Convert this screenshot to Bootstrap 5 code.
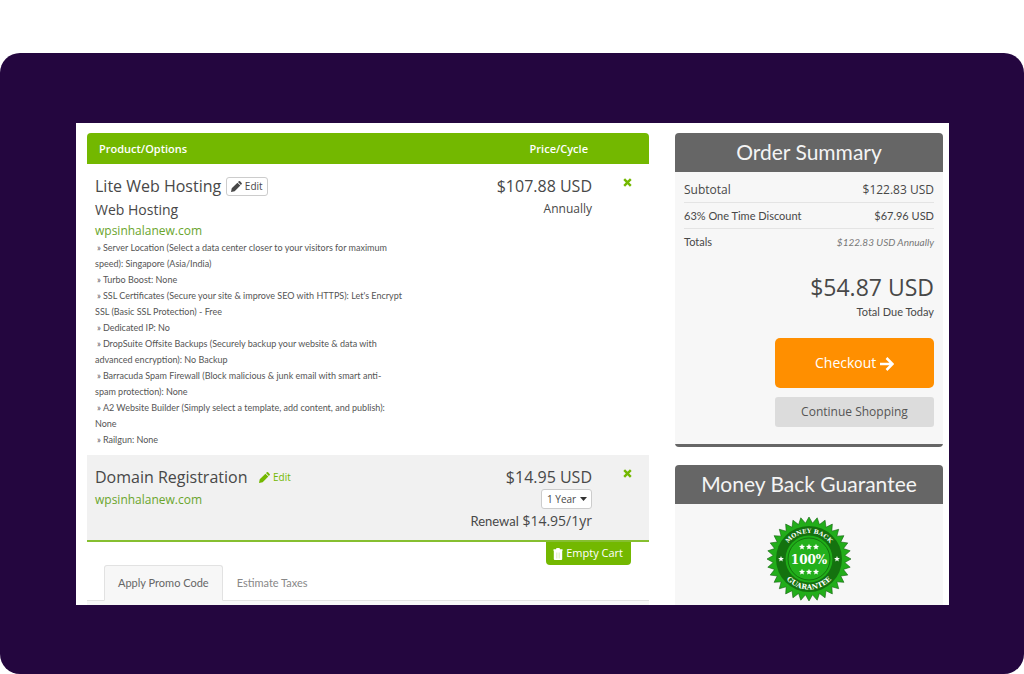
<!DOCTYPE html>
<html lang="en">
<head>
<meta charset="utf-8">
<meta name="viewport" content="width=device-width, initial-scale=1">
<title>Shopping Cart</title>
<link href="https://cdn.jsdelivr.net/npm/bootstrap@5.3.0/dist/css/bootstrap.min.css" rel="stylesheet">
<style>
  :root { --leaf: #73b800; --leaf-text: #6aa52c; --slate: #666; --ink: #484848; }
  body { font-family: "Open Sans", "Noto Sans", sans-serif; color: var(--ink); font-size: 12px; line-height: 16px; background: #fff; }
  .stage { margin-top: 53px; padding: 70px 75px 69px 76px; background: #24063f; border-radius: 20px; }
  .cart-page { display: grid; grid-template-columns: 562fr 268fr; column-gap: 26px; padding: 10px 6px 0 11px; background: #fff; }
  .narrow { font-family: Lato, "Open Sans", sans-serif; font-size: 11px; }

  .cart-table { width: 100%; border-bottom: 2px solid #86bf30; }
  .cart-table th { background: var(--leaf); color: #fff; font: 600 11px/16px "Open Sans", sans-serif; padding: 8px 4px 7px 12px; }
  .cart-table th:first-child { border-radius: 4px 0 0 0; }
  .cart-table th:last-child { border-radius: 0 4px 0 0; width: 57px; }
  .cart-table td { vertical-align: top; padding: 10px 0 7px 8px; }
  .cart-table td:last-child { padding: 12px 0 0 31px; }
  .cart-table .alt-row td { background: #f1f1f1; }
  .item-title { font-size: 16px; line-height: 24px; font-weight: 400; margin: 0; }
  .item-group { font-size: 14px; line-height: 24px; }
  .item-domain { font-size: 12px; line-height: 18px; color: var(--leaf-text); }
  .alt-row .item-domain, .cycle { font-size: 12px; line-height: 22px; }
  .renewal { font-size: 14px; line-height: 24px; }
  .renewal .narrow { font-size: 13px; }
  .options { font: 9px/16px Lato, "Open Sans", sans-serif; color: #555; }
  .options li::before { content: "»"; padding: 0 2px; }
  .edit-btn { font: 10px/17px "Open Sans", sans-serif; padding: 0 4px; border: 1px solid #ccc; border-radius: 3px; background: #fff; color: var(--ink); margin-left: 5px; }
  .edit-link { font: 10px/17px "Open Sans", sans-serif; color: var(--leaf); text-decoration: none; margin-left: 12px; }
  .remove-btn { display: block; border: 0; background: none; padding: 0; color: var(--leaf); line-height: 12px; }
  .term { appearance: none; width: 51px; height: 20px; padding: 0 0 0 5px; border: 1px solid #ccc; border-radius: 3px; font-size: 10px; line-height: 17px; color: var(--ink);
    background: #fff url("data:image/svg+xml,%3Csvg xmlns='http://www.w3.org/2000/svg' viewBox='0 0 8 4'%3E%3Cpath d='M0 0h7L3.500 4z' fill='%23333'/%3E%3C/svg%3E") no-repeat right 3px center / 8px 4px; }
  .empty-btn { margin-right: 18px; padding: 3px 8px 4px 7px; border: 0; border-radius: 0 0 4px 4px; background: var(--leaf); color: #fff; font-size: 11px; line-height: 16px; }
  .cart-tabs { border-bottom: 1px solid #e2e2e2; padding-left: 17px; }
  .cart-tabs .nav-link { font-size: 11px; line-height: 16px; padding: 9px 13px; color: #888; border-radius: 3px 3px 0 0; }
  .cart-tabs .nav-link.active { background: #f7f7f7; color: #666; border-color: #e2e2e2 #e2e2e2 #f7f7f7; }
  .tab-body { height: 4px; background: #f7f7f7; }

  .side-title { margin: 0; height: 39px; background: var(--slate); color: #f4f4f4; border-radius: 4px 4px 0 0; font: 400 21px/38px Lato, sans-serif; text-align: center; }
  .side-body { background: #f7f7f7; padding: 5px 9px 0; }
  .summary { border-bottom: 3px solid var(--slate); border-radius: 4px; margin-bottom: 18px; }
  .summary .side-body { padding-bottom: 17px; }
  .line { height: 26px; border-bottom: 1px solid #e4e4e4; }
  .annual { font-size: 10px; color: #777; }
  .due { font-size: 23px; line-height: 32px; margin-top: 16px; }
  .due-note { line-height: 18px; }
  .checkout-btn { width: 159px; height: 50px; border: 0; border-radius: 5px; background: #ff8f00; color: #fff; font-size: 14px; font-weight: 500; margin-top: 17px; }
  .shop-btn { width: 159px; height: 30px; border: 0; border-radius: 3px; background: #dcdcdc; color: #555; font-size: 12px; margin-top: 9px; }
  .seal-body { padding-top: 12px; }
</style>
</head>
<body>
<main class="stage">
  <div class="cart-page">
    <section>
      <table class="cart-table">
        <thead>
          <tr><th scope="col">Product/Options</th><th scope="col" class="text-end">Price/Cycle</th><th scope="col" aria-label="Remove"></th></tr>
        </thead>
        <tbody>
          <tr>
            <td>
              <div class="d-flex align-items-center">
                <h2 class="item-title">Lite Web Hosting</h2>
                <button class="edit-btn" type="button"><svg width="11" height="11" viewBox="0 0 12 12" aria-hidden="true"><path fill="currentColor" d="M0 12l.8-4L7 1.800 10.200 5 4 11.200zM7.600 1.200 8.600.3q.6-.5 1.300.1l1.700 1.700q.6.700.1 1.300l-.9 1z"/></svg> Edit</button>
              </div>
              <div class="item-group">Web Hosting</div>
              <div class="item-domain">wpsinhalanew.com</div>
              <ul class="options list-unstyled mb-0">
                <li>Server Location (Select a data center closer to your visitors for maximum<br>speed): Singapore (Asia/India)</li>
                <li>Turbo Boost: None</li>
                <li>SSL Certificates (Secure your site &amp; improve SEO with HTTPS): Let's Encrypt<br>SSL (Basic SSL Protection) - Free</li>
                <li>Dedicated IP: No</li>
                <li>DropSuite Offsite Backups (Securely backup your website &amp; data with<br>advanced encryption): No Backup</li>
                <li>Barracuda Spam Firewall (Block malicious &amp; junk email with smart anti-<br>spam protection): None</li>
                <li>A2 Website Builder (Simply select a template, add content, and publish):<br>None</li>
                <li>Railgun: None</li>
              </ul>
            </td>
            <td class="text-end"><div class="item-title">$107.88 USD</div><div class="cycle">Annually</div></td>
            <td><button class="remove-btn" type="button" aria-label="Remove Lite Web Hosting"><svg width="9" height="9" viewBox="0 0 9 9"><path d="M1.200 1.200l6.600 6.600M7.800 1.200L1.200 7.800" stroke="currentColor" stroke-width="2.400"/></svg></button></td>
          </tr>
          <tr class="alt-row">
            <td>
              <div class="d-flex align-items-center">
                <h2 class="item-title">Domain Registration</h2>
                <a class="edit-link" href="#"><svg width="11" height="11" viewBox="0 0 12 12" aria-hidden="true"><path fill="currentColor" d="M0 12l.8-4L7 1.800 10.200 5 4 11.200zM7.600 1.200 8.600.3q.6-.5 1.300.1l1.700 1.700q.6.700.1 1.300l-.9 1z"/></svg> Edit</a>
              </div>
              <div class="item-domain">wpsinhalanew.com</div>
            </td>
            <td class="text-end">
              <div class="item-title">$14.95 USD</div>
              <select class="term d-block ms-auto" aria-label="Registration period"><option>1 Year</option></select>
              <div class="renewal"><span class="narrow">Renewal</span> $14.95/1yr</div>
            </td>
            <td><button class="remove-btn" type="button" aria-label="Remove Domain Registration"><svg width="9" height="9" viewBox="0 0 9 9"><path d="M1.200 1.200l6.600 6.600M7.800 1.200L1.200 7.800" stroke="currentColor" stroke-width="2.400"/></svg></button></td>
          </tr>
        </tbody>
      </table>
      <div class="d-flex justify-content-end">
        <button class="empty-btn" type="button"><svg width="10" height="12" viewBox="0 0 10 12" aria-hidden="true"><path fill="#fff" d="M.5 1.200H3L3.500 0h3L7 1.200h2.500V3h-9zM.8 2.500h8.400V11q0 1-1 1H1.800q-1 0-1-1z"/><path stroke="#c9e59a" d="M3.500 4.500v6M5 4.500v6M6.500 4.500v6" stroke-width=".5"/></svg> Empty Cart</button>
      </div>
      <ul class="nav nav-tabs cart-tabs narrow">
        <li class="nav-item"><a class="nav-link active" href="#">Apply Promo Code</a></li>
        <li class="nav-item"><a class="nav-link" href="#">Estimate Taxes</a></li>
      </ul>
      <div class="tab-body"></div>
    </section>

    <aside class="d-flex flex-column">
      <section class="summary">
        <h2 class="side-title">Order Summary</h2>
        <div class="side-body">
          <div class="line d-flex justify-content-between align-items-center"><span>Subtotal</span><span>$122.83 USD</span></div>
          <div class="line narrow d-flex justify-content-between align-items-center"><span>63% One Time Discount</span><span>$67.96 USD</span></div>
          <div class="line narrow border-0 d-flex justify-content-between align-items-center"><span>Totals</span><em class="annual">$122.83 USD Annually</em></div>
          <div class="text-end">
            <div class="due">$54.87 USD</div>
            <div class="narrow due-note">Total Due Today</div>
            <button class="checkout-btn" type="button">Checkout <svg width="14" height="14" viewBox="0 0 14 14" aria-hidden="true"><path d="M0 7h12M6.500 1l6 6-6 6" fill="none" stroke="#fff" stroke-width="2.500"/></svg></button>
            <button class="shop-btn" type="button">Continue Shopping</button>
          </div>
        </div>
      </section>
      <section class="flex-grow-1 d-flex flex-column">
        <h2 class="side-title">Money Back Guarantee</h2>
        <div class="side-body seal-body flex-grow-1 text-center">
          <svg id="seal" class="d-block mx-auto" width="86" height="86" viewBox="-43 -43 86 86" role="img" aria-label="100% money back guarantee"></svg>
        </div>
      </section>
    </aside>
  </div>
</main>
<script src="https://cdn.jsdelivr.net/npm/bootstrap@5.3.0/dist/js/bootstrap.bundle.min.js"></script>
<script>
  // Guarantee seal: toothed rim, dark lettered ring, bright centre
  const polar = (n, outer, inner, cx = 0, cy = 0) => Array.from({ length: n * 2 }, (_, i) => {
    const a = Math.PI * i / n - Math.PI / 2, r = i % 2 ? inner : outer;
    return (cx + r * Math.cos(a)).toFixed(2) + ',' + (cy + r * Math.sin(a)).toFixed(2);
  }).join(' ');
  const star = (x, y, r) => `<polygon fill="#fff" points="${polar(5, r, r * .45, x, y)}"/>`;
  document.getElementById('seal').innerHTML =
    `<polygon points="${polar(32, 42, 36)}" fill="#22ad1a" stroke="#14620f" stroke-width=".6"/>
     <circle r="33" fill="#14720f"/><circle r="23.500" fill="#1fae18"/>
     <circle r="21" fill="#23b01c" stroke="#14720f"/>
     <path id="arcTop" d="M-26 0A26 26 0 0 1 26 0" fill="none"/>
     <path id="arcBottom" d="M-30.500 0A30.500 30.500 0 0 0 30.500 0" fill="none"/>
     <g fill="#fff" font-family="DejaVu Serif, serif" font-weight="700" text-anchor="middle">
       <text font-size="6"><textPath href="#arcTop" startOffset="50%">MONEY BACK</textPath></text>
       <text font-size="7"><textPath href="#arcBottom" startOffset="50%">GUARANTEE</textPath></text>
       <text font-size="12" y="5">100%</text>
     </g>` +
    [-7, 0, 7].map(x => star(x, -12, 3.2) + star(x, 13, 3.2)).join('') + star(-28, 0, 3) + star(28, 0, 3);
</script>
</body>
</html>
